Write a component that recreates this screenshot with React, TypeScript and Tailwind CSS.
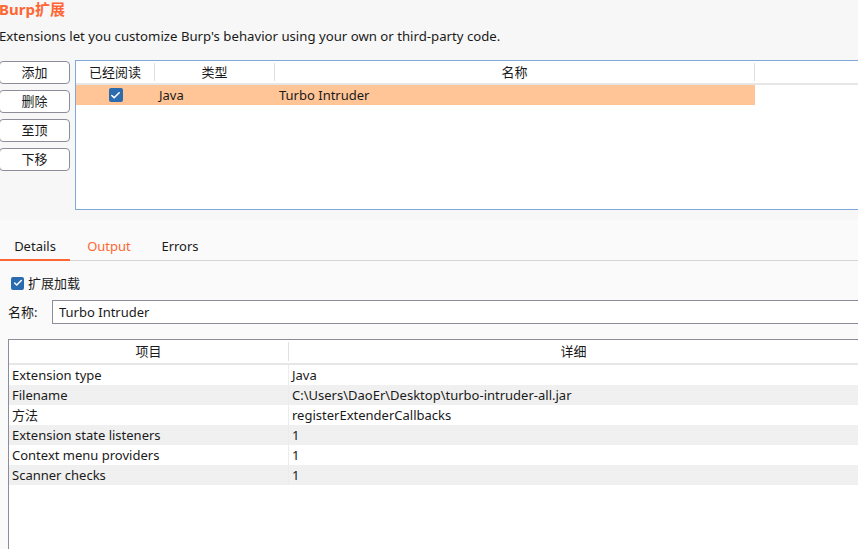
import { Check } from "lucide-react";

const font = { fontFamily: '"Noto Sans", "Noto Sans CJK SC", sans-serif' };

const Tick = ({ size = 14 }: { size?: number }) => (
  <span
    className="inline-flex items-center justify-center rounded-[2px] bg-[#2b6cb0]"
    style={{ width: size, height: size }}
  >
    <Check size={size - 3} strokeWidth={3.5} className="text-white" />
  </span>
);

const details = [
  ["Extension type", "Java"],
  ["Filename", "C:\\Users\\DaoEr\\Desktop\\turbo-intruder-all.jar"],
  ["方法", "registerExtenderCallbacks"],
  ["Extension state listeners", "1"],
  ["Context menu providers", "1"],
  ["Scanner checks", "1"],
];

const App = () => {
  return (
    <div className="w-[858px] h-[549px] overflow-hidden bg-[#fafafa] text-[13px] text-[#1a1a1a] leading-none" style={font}>
      {/* top section */}
      <div className="h-[220px] bg-[#f7f7f7]">
        <h1 className="-ml-[1px] text-[15px] font-bold text-[#ff6633] h-[20px] leading-[18px]">Burp扩展</h1>
        <p className="mt-[7px] -ml-[1px] h-[20px] leading-[18px] text-[13.2px]">
          Extensions let you customize Burp's behavior using your own or third-party code.
        </p>

        <div className="flex mt-[13px]">
          <div className="flex flex-col gap-[6px] w-[76px] -ml-[1px] pt-[1px]">
            {["添加", "删除", "至顶", "下移"].map((b) => (
              <button
                key={b}
                className="w-[71px] h-[23px] rounded-[4px] border border-[#8d8d9a] bg-white text-[13px] leading-none"
              >
                {b}
              </button>
            ))}
          </div>

          <div className="flex-1 h-[150px] border border-[#80a8d8] border-r-0 bg-white">
            <div className="flex h-[24px] border-b-2 border-[#e6e6e6] bg-white">
              <div className="w-[79px] flex items-center justify-center border-r border-[#e0e0e0] my-[2px]">已经阅读</div>
              <div className="w-[120px] flex items-center justify-center border-r border-[#e0e0e0] my-[2px]">类型</div>
              <div className="w-[480px] flex items-center justify-center border-r border-[#e0e0e0] my-[2px]">名称</div>
              <div className="flex-1" />
            </div>
            <div className="flex h-[20px] w-[679px] bg-[#ffc597] items-center">
              <div className="w-[79px] flex justify-center">
                <Tick />
              </div>
              <div className="w-[120px] pl-[4px]">Java</div>
              <div className="pl-[4px]">Turbo Intruder</div>
            </div>
          </div>
        </div>
      </div>

      {/* lower section */}
      <div className="mt-[4px]">
        <div className="flex h-[37px] items-end border-b border-[#d4d4d4]">
          <div className="w-[70px] h-[37px] flex items-center justify-center pt-[10px] border-b-2 border-[#ff6633] -mb-[1px]">
            Details
          </div>
          <div className="w-[78px] h-[37px] flex items-center justify-center pt-[10px] text-[#ff6633]">Output</div>
          <div className="w-[64px] h-[37px] flex items-center justify-center pt-[10px]">Errors</div>
        </div>

        <div className="flex items-center gap-[4px] ml-[11px] mt-[14px] h-[16px]">
          <Tick size={13} />
          <span>扩展加载</span>
        </div>

        <div className="flex items-center mt-[9px] ml-[8px]">
          <span className="w-[44px]">名称:</span>
          <div className="flex-1 h-[24px] border border-[#8d8d9a] border-r-0 bg-white flex items-center pl-[6px]">
            Turbo Intruder
          </div>
        </div>

        <div className="ml-[8px] mt-[15px] h-[220px] border border-[#8d8d9a] border-r-0 bg-white">
          <div className="flex h-[25px] border-b-2 border-[#e6e6e6]">
            <div className="w-[280px] flex items-center justify-center border-r border-[#e0e0e0] my-[2px]">项目</div>
            <div className="flex-1 flex items-center justify-center">详细</div>
          </div>
          {details.map(([k, v], i) => (
            <div key={k} className={`flex h-[20px] items-center ${i % 2 ? "bg-[#f0f0f0]" : "bg-white"}`}>
              <div className="w-[280px] pl-[3px] h-full flex items-center border-r border-[#ececec]">{k}</div>
              <div className="pl-[3px]">{v}</div>
            </div>
          ))}
        </div>
      </div>
    </div>
  );
};

export default App;
